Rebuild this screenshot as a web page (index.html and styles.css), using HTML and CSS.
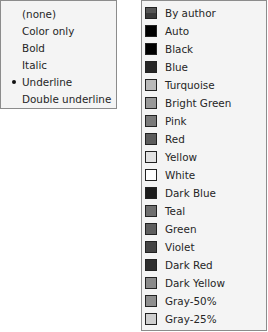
FILE: index.html
```html
<!DOCTYPE html>
<html lang="en">
<head>
  <meta charset="UTF-8">
  <title>Underline menus</title>
  <link rel="stylesheet" href="styles.css">
</head>
<body>
  <div class="panes">

    <!-- Underline style menu -->
    <ul class="menu style-menu">
      <li>(none)</li>
      <li>Color only</li>
      <li>Bold</li>
      <li>Italic</li>
      <li class="checked">Underline</li>
      <li>Double underline</li>
    </ul>

    <!-- Underline colour menu -->
    <ul class="menu color-menu">
      <li><span class="swatch by-author"></span>By author</li>
      <li><span class="swatch" style="background:#000"></span>Auto</li>
      <li><span class="swatch" style="background:#000"></span>Black</li>
      <li><span class="swatch" style="background:#262626"></span>Blue</li>
      <li><span class="swatch" style="background:#b9b9b9"></span>Turquoise</li>
      <li><span class="swatch" style="background:#989898"></span>Bright Green</li>
      <li><span class="swatch" style="background:#7a7a7a"></span>Pink</li>
      <li><span class="swatch" style="background:#5c5c5c"></span>Red</li>
      <li><span class="swatch" style="background:#e2e2e2"></span>Yellow</li>
      <li><span class="swatch" style="background:#fff"></span>White</li>
      <li><span class="swatch" style="background:#1c1c1c"></span>Dark Blue</li>
      <li><span class="swatch" style="background:#6e6e6e"></span>Teal</li>
      <li><span class="swatch" style="background:#5e5e5e"></span>Green</li>
      <li><span class="swatch" style="background:#444"></span>Violet</li>
      <li><span class="swatch" style="background:#2e2e2e"></span>Dark Red</li>
      <li><span class="swatch" style="background:#8a8a8a"></span>Dark Yellow</li>
      <li><span class="swatch" style="background:#8e8e8e"></span>Gray-50%</li>
      <li><span class="swatch" style="background:#cfcfcf"></span>Gray-25%</li>
    </ul>

  </div>
</body>
</html>
```

FILE: styles.css
```css
/* Reset */
body, html {
  margin: 0;
  padding: 0;
  background: #fff;
  font-family: "DejaVu Sans", sans-serif;
  font-size: 10.4px;
  color: #262626;
}

.panes {
  display: flex;
  align-items: flex-start;
  gap: 24px;
}

/* Shared menu box */
.menu {
  list-style: none;
  margin: 0;
  background: #f4f4f4;
  border: 1px solid #8c8c8c;
}

.menu li {
  display: flex;
  align-items: center;
  white-space: nowrap;
}

/* Left menu */
.style-menu {
  width: 117px;
  box-sizing: border-box;
  padding: 4px 0 1px 21px;
}

.style-menu li {
  height: 17px;
  position: relative;
}

.style-menu li.checked::before {
  content: "";
  position: absolute;
  left: -10px;
  top: 7px;
  width: 4px;
  height: 4px;
  border-radius: 50%;
  background: #111;
}

/* Right menu */
.color-menu {
  width: 126px;
  box-sizing: border-box;
  padding: 3px 0 2px 3px;
}

.color-menu li {
  height: 18px;
  gap: 8px;
}

.swatch {
  width: 12px;
  height: 12px;
  box-sizing: border-box;
  border: 1px solid #222;
  flex: none;
}

.swatch.by-author {
  background: linear-gradient(#555 50%, #3a3a3a 50%);
}
```
